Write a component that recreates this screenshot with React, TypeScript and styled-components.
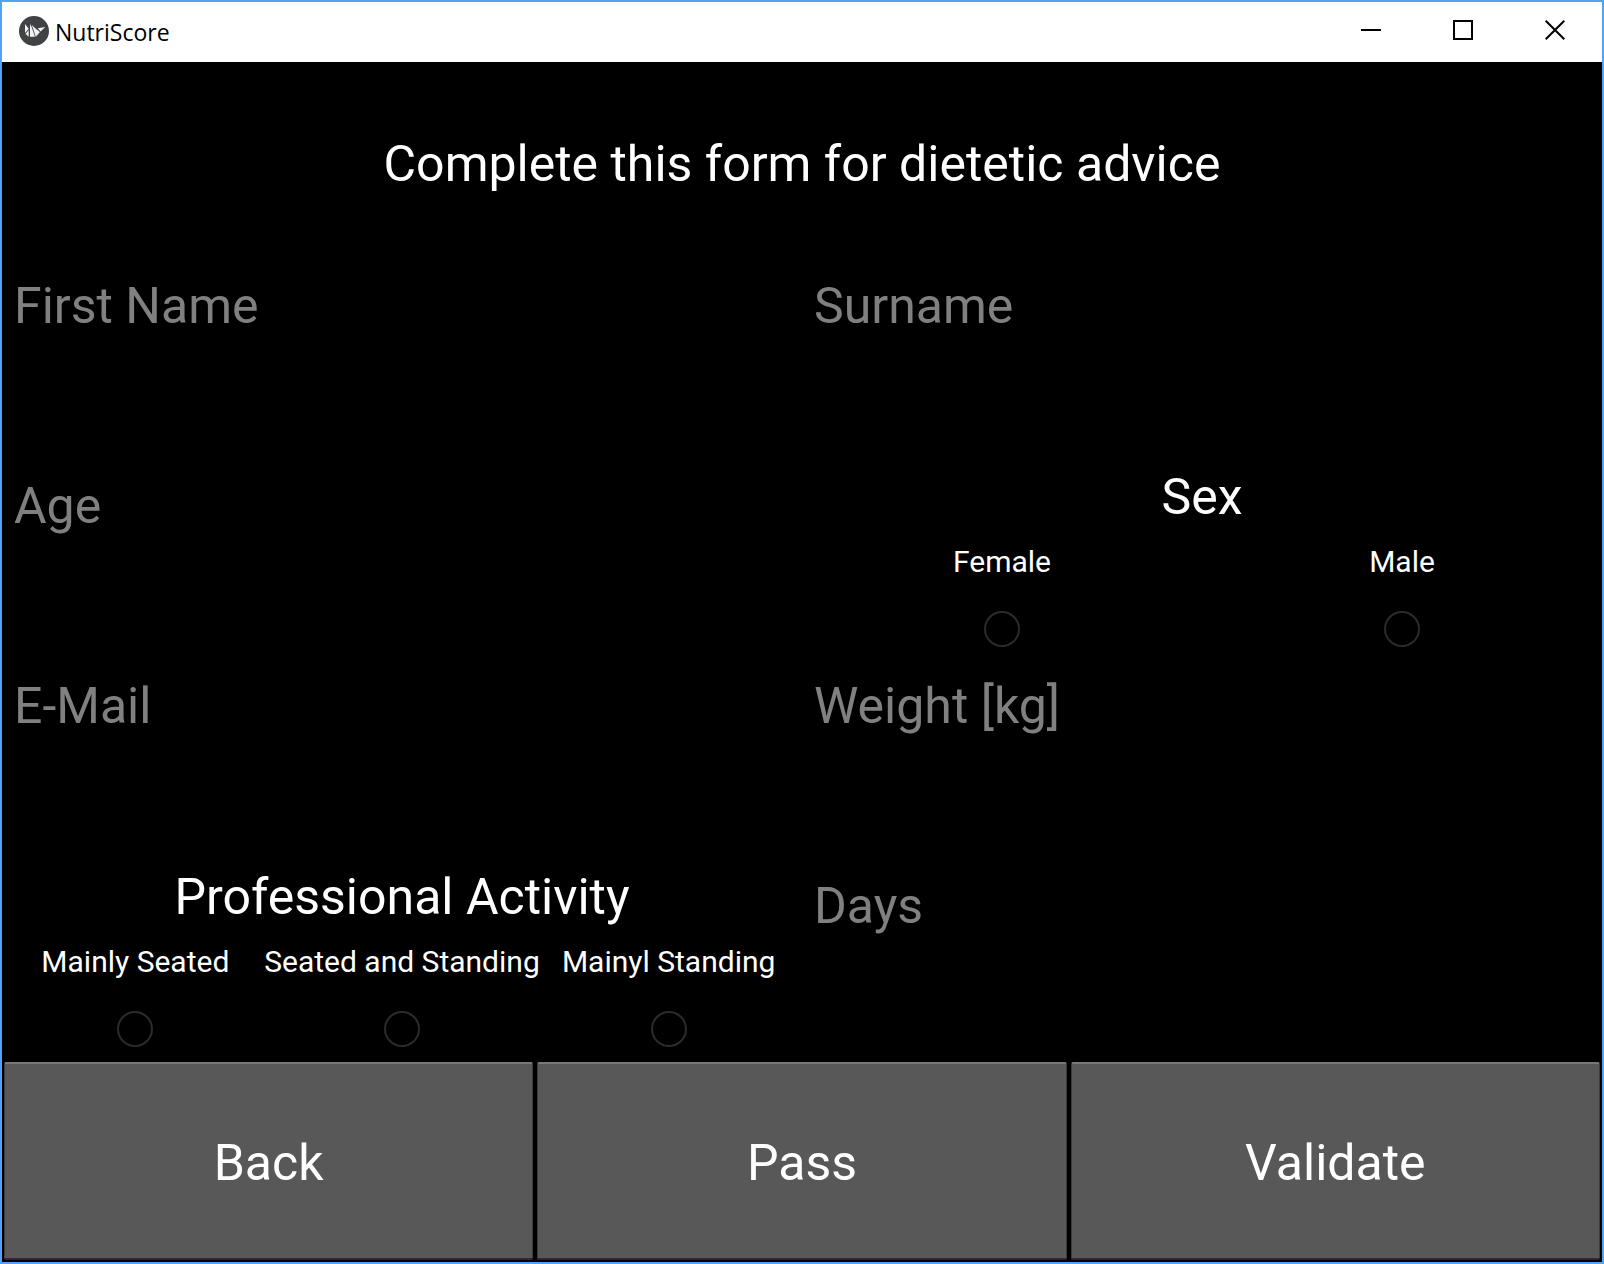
import React from "react";
import styled, { createGlobalStyle } from "styled-components";

const GlobalStyle = createGlobalStyle`
  *, *::before, *::after { box-sizing: border-box; }
  body { margin: 0; background: #000; }
`;

const AppWindow = styled.div`
  display: flex;
  flex-direction: column;
  min-height: 100vh;
  border: 2px solid #52a2fa;
  background: #000;
  color: #fff;
  font-family: Roboto, sans-serif;
`;

const TitleBar = styled.header`
  display: flex;
  align-items: center;
  justify-content: space-between;
  height: 60px;
  padding: 0 1px 0 17px;
  background: #fff;
  color: #000;
`;

const AppName = styled.div`
  display: flex;
  align-items: flex-start;
  gap: 6px;
  font: 23px/32px "Open Sans", "Noto Sans", sans-serif;
`;

const WindowControls = styled.div`
  display: flex;
  align-self: stretch;
`;

const WindowButton = styled.button`
  display: flex;
  align-items: center;
  justify-content: center;
  width: 92px;
  padding: 0 0 4px;
  border: 0;
  background: transparent;
  color: #000;
`;

const Form = styled.form`
  flex: 1;
  display: grid;
  grid-template-rows: repeat(6, 1fr);
`;

const Heading = styled.h1`
  display: flex;
  align-items: center;
  justify-content: center;
  margin: 0;
  padding-top: 4px;
  font-size: 50px;
  font-weight: 400;
  line-height: 60px;
`;

const FieldRow = styled.div`
  display: grid;
  grid-template-columns: repeat(2, minmax(0, 1fr));
`;

const TextField = styled.input`
  align-self: start;
  width: 100%;
  min-width: 0;
  padding: 14px 12px 12px;
  border: 0;
  outline: 0;
  background: transparent;
  color: #fff;
  font: 50px/60px Roboto, sans-serif;

  &::placeholder {
    color: #808080;
    opacity: 1;
  }
`;

const ChoiceGroup = styled.div`
  display: grid;
  grid-template-rows: 1fr 2fr;
`;

const ChoiceTitle = styled.div`
  display: flex;
  align-items: center;
  justify-content: center;
  padding-top: 4px;
  font-size: 50px;
  line-height: 60px;
`;

const Choices = styled.div<{ $count: number }>`
  display: grid;
  grid-template-columns: repeat(${(p) => p.$count}, minmax(0, 1fr));
`;

const Choice = styled.label`
  display: grid;
  grid-template-columns: minmax(0, 1fr);
  grid-template-rows: 1fr 1fr;
  place-items: center;
  font-size: 30px;
  line-height: 36px;
  white-space: nowrap;
`;

const Radio = styled.input`
  appearance: none;
  width: 36px;
  height: 36px;
  margin: 0;
  border: 2px solid #2b2b2b;
  border-radius: 50%;

  &:checked {
    background: radial-gradient(circle, #33a6d6 0 8px, transparent 9px);
  }
`;

const Actions = styled.div`
  display: grid;
  grid-template-columns: repeat(3, 1fr);
`;

const ActionButton = styled.button`
  margin: 0 2px 2px;
  padding: 4px 0 0;
  border: solid;
  border-width: 2px 1px;
  border-color: #787878 #3c3c3c #2c2c2c;
  border-radius: 2px;
  background: #585858;
  color: #fff;
  font: 50px/60px Roboto, sans-serif;
`;

function Logo() {
  return (
    <svg width="30" height="30" viewBox="0 0 30 30" aria-hidden="true">
      <circle cx="15" cy="15" r="15" fill="#414246" />
      <g fill="#f1f2f2">
        <path d="M6 8 9.7 12.8 6 17z" />
        <path d="M9.7 14 9.7 20.7 6.6 18z" />
        <path d="M11 8 12.4 10.5 16 20.7 11 20.7z" />
        <path d="M12.8 9 16.5 12.5 21 16 16.8 20.8z" />
        <path d="M18.8 12.3 26.3 11 21.6 15.4z" />
      </g>
    </svg>
  );
}

function ControlIcon({ d }: { d: string }) {
  return (
    <svg width="20" height="20" viewBox="0 0 20 20" fill="none" stroke="currentColor" strokeWidth="2" aria-hidden="true">
      <path d={d} />
    </svg>
  );
}

function Field({ name, type = "text" }: { name: string; type?: string }) {
  return <TextField type={type} placeholder={name} aria-label={name} />;
}

function RadioGroup({ id, title, options }: { id: string; title: string; options: string[] }) {
  return (
    <ChoiceGroup role="radiogroup" aria-labelledby={id}>
      <ChoiceTitle id={id}>{title}</ChoiceTitle>
      <Choices $count={options.length}>
        {options.map((option) => (
          <Choice key={option}>
            <span>{option}</span>
            <Radio type="radio" name={id} value={option} />
          </Choice>
        ))}
      </Choices>
    </ChoiceGroup>
  );
}

export default function App() {
  return (
    <>
      <GlobalStyle />
      <AppWindow>
        <TitleBar>
          <AppName>
            <Logo />
            <span>NutriScore</span>
          </AppName>
          <WindowControls>
            <WindowButton type="button" aria-label="Minimize">
              <ControlIcon d="M0 10H20" />
            </WindowButton>
            <WindowButton type="button" aria-label="Maximize">
              <ControlIcon d="M1 1H19V19H1Z" />
            </WindowButton>
            <WindowButton type="button" aria-label="Close">
              <ControlIcon d="M.7.7 19.3 19.3M19.3.7.7 19.3" />
            </WindowButton>
          </WindowControls>
        </TitleBar>
        <Form onSubmit={(e) => e.preventDefault()}>
          <Heading>Complete this form for dietetic advice</Heading>
          <FieldRow>
            <Field name="First Name" />
            <Field name="Surname" />
          </FieldRow>
          <FieldRow>
            <Field name="Age" />
            <RadioGroup id="sex" title="Sex" options={["Female", "Male"]} />
          </FieldRow>
          <FieldRow>
            <Field name="E-Mail" type="email" />
            <Field name="Weight [kg]" />
          </FieldRow>
          <FieldRow>
            <RadioGroup
              id="activity"
              title="Professional Activity"
              options={["Mainly Seated", "Seated and Standing", "Mainyl Standing"]}
            />
            <Field name="Days" />
          </FieldRow>
          <Actions>
            <ActionButton type="button">Back</ActionButton>
            <ActionButton type="button">Pass</ActionButton>
            <ActionButton type="submit">Validate</ActionButton>
          </Actions>
        </Form>
      </AppWindow>
    </>
  );
}
